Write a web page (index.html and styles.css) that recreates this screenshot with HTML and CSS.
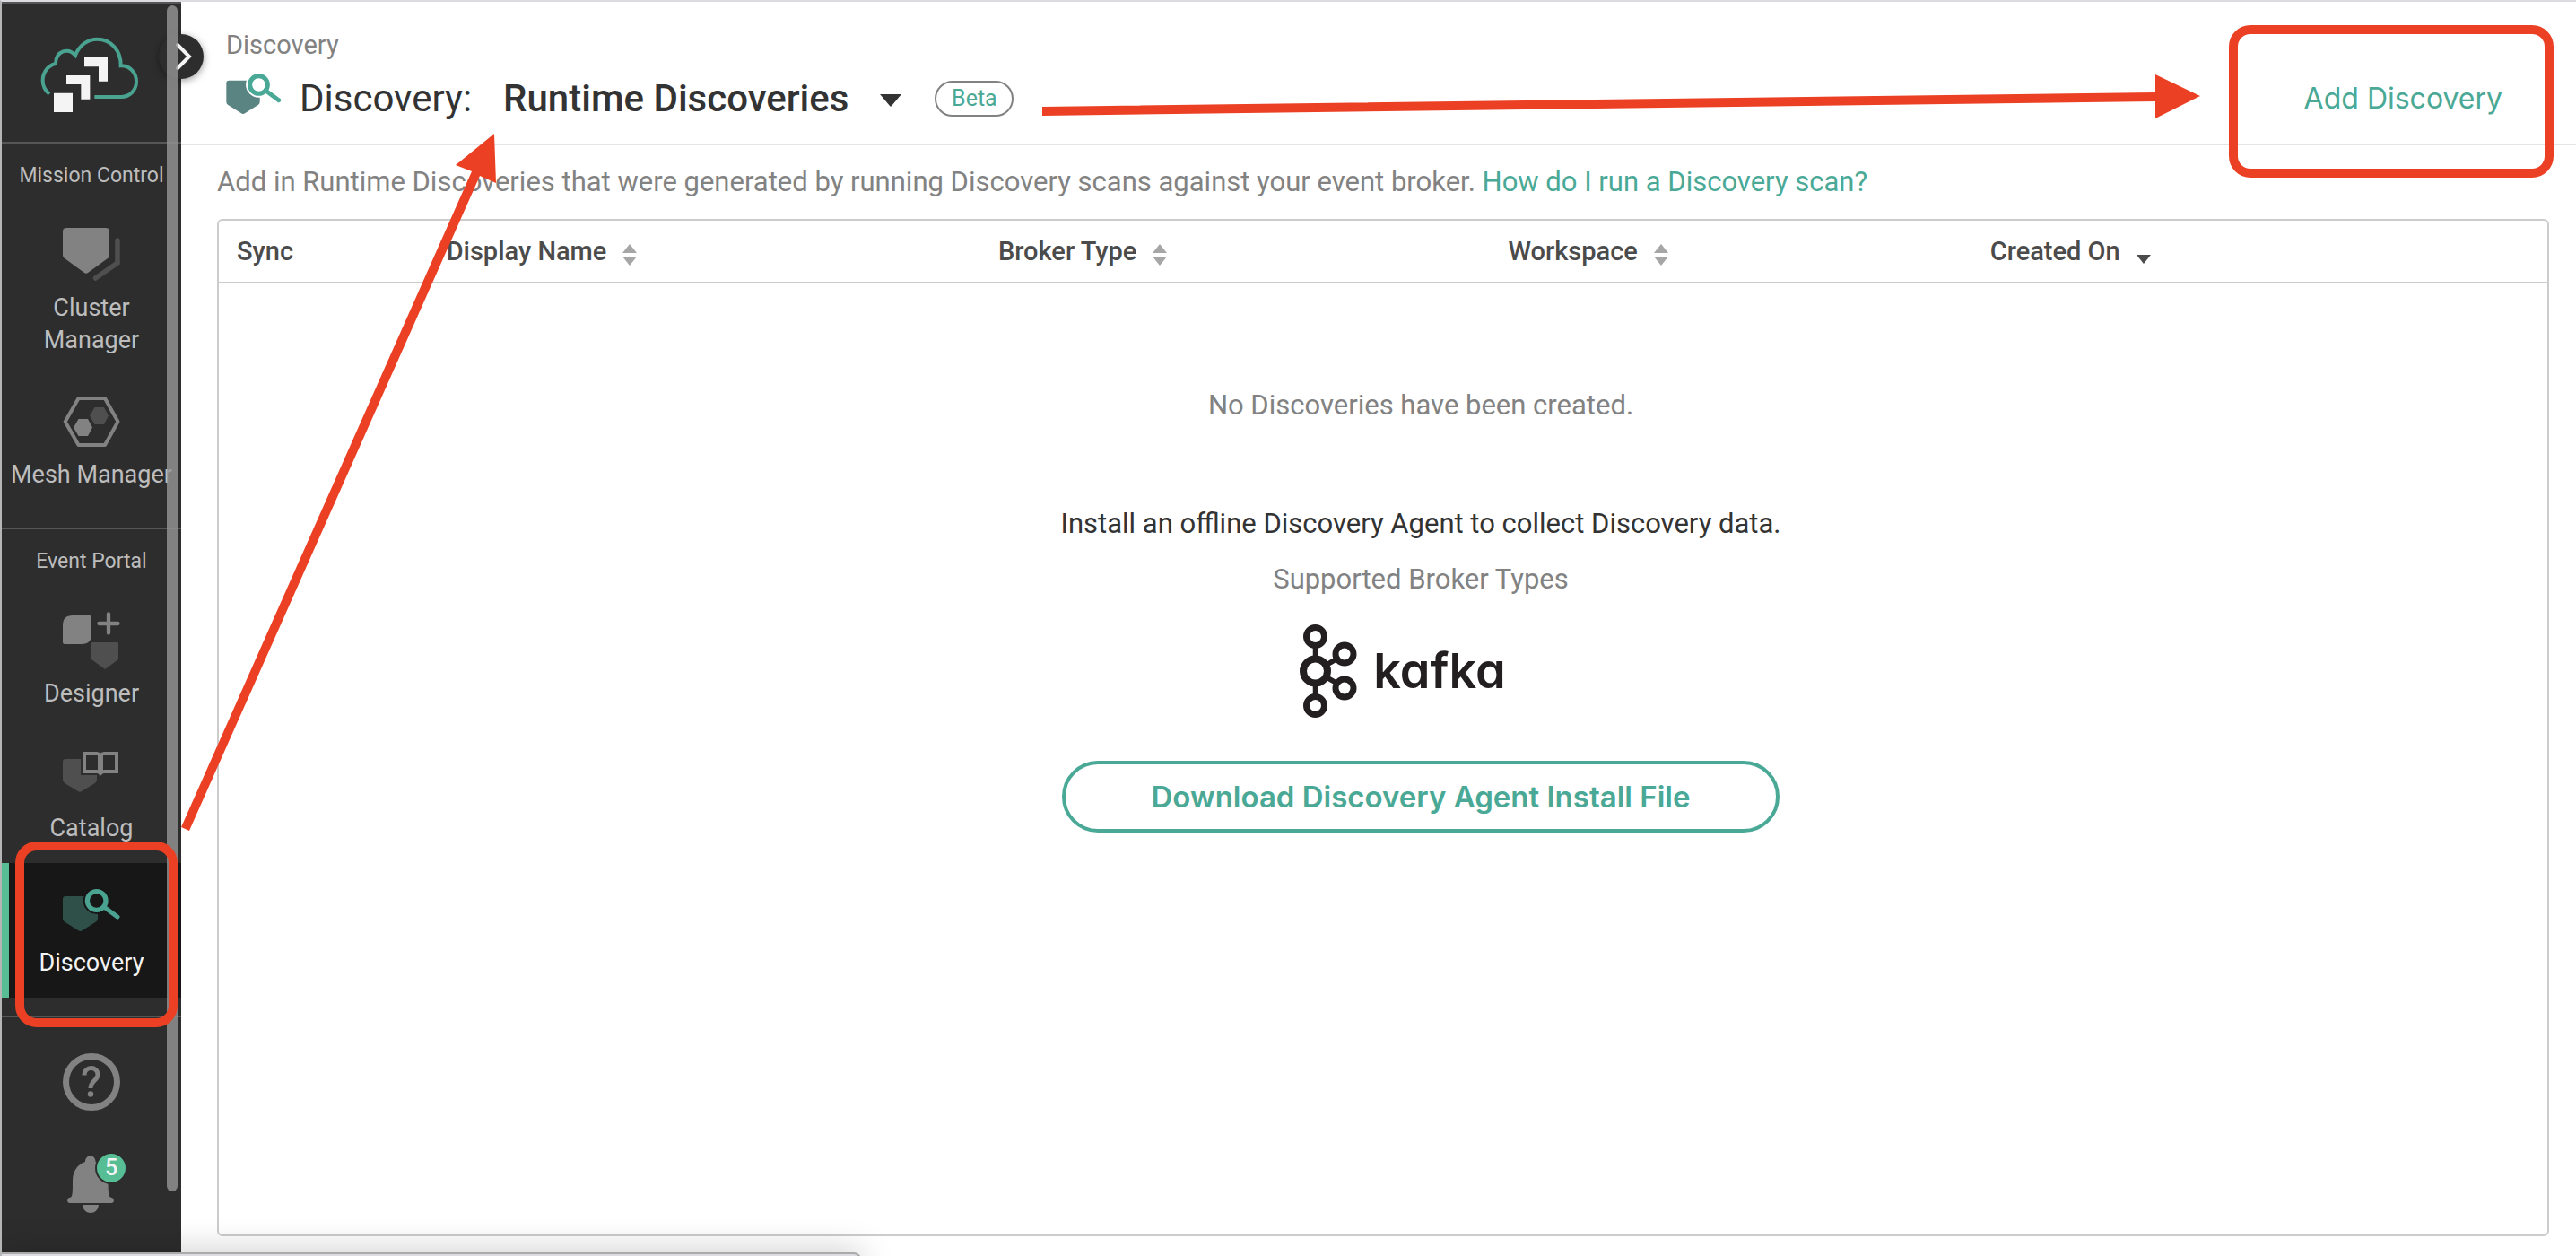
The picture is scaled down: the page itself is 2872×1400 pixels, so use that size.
FILE: index.html
```html
<!DOCTYPE html>
<html lang="en">
<head>
<meta charset="utf-8">
<title>Discovery: Runtime Discoveries</title>
<link rel="stylesheet" href="styles.css">
</head>
<body>
<div class="app">
  <nav class="sidebar" aria-label="Main">
    <a class="logo" href="#" aria-label="Home">
      <svg width="120" height="88" viewBox="126 114 360 264" fill="none">
        <path d="M165 317C147 302 143 287 143 272C143 245 160 222 186 216C187 172 229 161 252 188C266 152 296 134 325 134C371 134 405 172 404 223C433 222 456 245 456 276C456 304 434 327 406 327H316" stroke="#4aa290" stroke-width="12"/>
        <path d="M282 195H360V275H330V226H282ZM222 255H301V335H271V285H222ZM180 314H243V378H180Z" fill="#f4f4f4"/>
      </svg>
    </a>
    <section class="group">
      <h2 class="group-title">Mission Control</h2>
      <a class="item" href="#">
        <svg class="item-icon" viewBox="0 0 64 64">
          <path d="M4 2H48Q52 2 52 6V33Q52 35 50 36L28 52Q26 53.500 24 52L2 36Q0 35 0 33V6Q0 2 4 2Z" fill="#828282"/>
          <path d="M61 16V41L36.500 58" fill="none" stroke="#4f4f4f" stroke-width="5.500" stroke-linecap="round"/>
        </svg>
        <span>Cluster<br>Manager</span>
      </a>
      <a class="item" href="#">
        <svg class="item-icon" viewBox="0 0 64 64">
          <path d="M2.700 32L17.500 6H47L61.500 32L47 58H17.500Z" fill="none" stroke="#828282" stroke-width="4" stroke-linejoin="round"/>
          <path d="M12 38.500L17.500 29H28L33 38.500L28 48H17.500Z" fill="#828282"/>
          <path d="M30 25.500L35.500 16H46L51 25.500L46 35H35.500Z" fill="#4f4f4f"/>
        </svg>
        <span>Mesh Manager</span>
      </a>
    </section>
    <section class="group">
      <h2 class="group-title">Event Portal</h2>
      <a class="item" href="#">
        <svg class="item-icon" viewBox="0 0 64 64">
          <path d="M11 4H30Q32 4 32 6V25Q32 36 21 36H2Q0 36 0 34V15Q0 4 11 4Z" fill="#828282"/>
          <path d="M51 2.500V23.500M40.500 13H61.500" stroke="#828282" stroke-width="4.300" stroke-linecap="round"/>
          <path d="M33 34H61Q62 34 62 35V53L47 64L32 53V35Q32 34 33 34Z" fill="#4f4f4f"/>
        </svg>
        <span>Designer</span>
      </a>
      <a class="item" href="#">
        <svg class="item-icon" viewBox="0 0 64 64">
          <path d="M3 14H20V32H38V37Q38 39 36 41L21 50Q19 51.500 17 50L2 41Q0 39 0 37V17Q0 14 3 14Z" fill="#4f4f4f"/>
          <path d="M24 8H38Q40 8 42 10Q44 8 46 8H60V28H46Q44 28 42 30Q40 28 38 28H24Z" fill="none" stroke="#828282" stroke-width="4"/>
          <path d="M42 10V30" stroke="#828282" stroke-width="6"/>
        </svg>
        <span>Catalog</span>
      </a>
      <a class="item item-active" href="#" aria-current="page">
        <svg class="item-icon" viewBox="0 0 64 64">
          <path d="M3 17H36L39 37V42Q39 44 37 45.500L22 55Q19.500 57 17 55L2 45.500Q0 44 0 42V20Q0 17 3 17Z" fill="#2e5049"/>
          <circle cx="37.700" cy="22" r="15" fill="#171717"/>
          <circle cx="37.700" cy="22" r="10.300" fill="none" stroke="#4aa290" stroke-width="5.300"/>
          <path d="M46 29L61 40" stroke="#4aa290" stroke-width="5" stroke-linecap="round"/>
        </svg>
        <span>Discovery</span>
      </a>
    </section>
    <div class="tools">
      <button class="tool" type="button" aria-label="Help">
        <svg class="item-icon" viewBox="0 0 64 64" fill="none" stroke="#828282">
          <circle cx="32" cy="32" r="28.500" stroke-width="7"/>
          <path d="M24 24.500C24 14 39 14 39 24C39 30 31 31 31 39" stroke-width="5"/>
          <circle cx="31" cy="45.500" r="3.200" fill="#828282" stroke="none"/>
        </svg>
      </button>
      <button class="tool" type="button" aria-label="Notifications">
        <svg class="item-icon" viewBox="0 0 64 64" fill="#828282">
          <path d="M25 7C25 -2 36.500 -2 36.500 7C46 11 50.500 20 50.500 28C50.500 39 51 45 53 46.500C58 47 58 53 54 53H8C4 53 4 47 9 46.500C11 45 11 39 11 28C11 18 16 10 25 7ZM22 55H40C39 67 23 67 22 55Z"/>
        </svg>
        <span class="count">5</span>
      </button>
    </div>
    <button class="expand" type="button" aria-label="Expand menu">
      <svg width="50" height="50" viewBox="0 0 50 50" fill="none"><path d="M21 12L34 25L21 38" stroke="#f4f4f4" stroke-width="4" stroke-linecap="round"/></svg>
    </button>
    <div class="scroll-thumb"></div>
  </nav>

  <main class="main">
    <header class="header">
      <div class="heading">
        <div class="breadcrumb">Discovery</div>
        <div class="title-row">
          <svg class="title-icon" viewBox="0 9 64 48">
            <path d="M3 17H36L39 37V42Q39 44 37 45.500L22 55Q19.500 57 17 55L2 45.500Q0 44 0 42V20Q0 17 3 17Z" fill="#5a8482"/>
            <circle cx="37.700" cy="22" r="15" fill="#fff"/>
            <circle cx="37.700" cy="22" r="10.300" fill="none" stroke="#4aa996" stroke-width="5.300"/>
            <path d="M46 29L61 40" stroke="#4aa996" stroke-width="5" stroke-linecap="round"/>
          </svg>
          <h1 class="title">Discovery:</h1>
          <button class="switcher" type="button" aria-haspopup="listbox">Runtime Discoveries
            <svg width="26" height="32" viewBox="0 0 26 32"><path d="M1 11H25L14 24Q13 25 12 24Z" fill="#333"/></svg>
          </button>
          <span class="beta">Beta</span>
        </div>
      </div>
      <button class="add" type="button">Add Discovery</button>
      <div class="mark mark-add"></div>
    </header>

    <p class="intro">Add in Runtime Discoveries that were generated by running Discovery scans against your event broker. <a href="#">How do I run a Discovery scan?</a></p>

    <div class="panel">
      <table class="table">
        <thead>
          <tr>
            <th class="col-sync">Sync</th>
            <th class="col-name"><button class="sort" type="button">Display Name <svg width="16" height="32" viewBox="0 0 16 32"><path d="M8 8L16 18H0ZM8 32L16 22H0Z" fill="#a6a6a6"/></svg></button></th>
            <th class="col-broker"><button class="sort" type="button">Broker Type <svg width="16" height="32" viewBox="0 0 16 32"><path d="M8 8L16 18H0ZM8 32L16 22H0Z" fill="#a6a6a6"/></svg></button></th>
            <th class="col-space"><button class="sort" type="button">Workspace <svg width="16" height="32" viewBox="0 0 16 32"><path d="M8 8L16 18H0ZM8 32L16 22H0Z" fill="#a6a6a6"/></svg></button></th>
            <th aria-sort="descending"><button class="sort" type="button">Created On <svg width="16" height="32" viewBox="0 0 16 32"><path d="M8 30L16 20H0Z" fill="#4b4b4b"/></svg></button></th>
          </tr>
        </thead>
      </table>
      <div class="empty">
        <p class="muted">No Discoveries have been created.</p>
        <p class="install">Install an offline Discovery Agent to collect Discovery data.</p>
        <p class="muted supported">Supported Broker Types</p>
        <div class="kafka">
          <svg width="66" height="104" viewBox="0 0 66 104" fill="none" stroke="#231f20">
            <path d="M17.500 26V78M30 45L44 37M30 59L44 67" stroke-width="5.500"/>
            <g fill="#fff" stroke-width="7">
              <circle cx="17.500" cy="13.500" r="10"/>
              <circle cx="17.500" cy="90.500" r="10"/>
              <circle cx="50" cy="33" r="10"/>
              <circle cx="50" cy="71" r="10"/>
              <circle cx="17.500" cy="52" r="13.500" stroke-width="8"/>
            </g>
          </svg>
          <span>kafka</span>
        </div>
        <button class="download" type="button">Download Discovery Agent Install File</button>
      </div>
    </div>
  </main>

  <div class="mark mark-nav"></div>
  <svg class="arrow arrow-up" width="360" height="790" viewBox="200 140 360 790" fill="#ec4025">
    <path d="M202 922L526 191L508 184L551 149L553 204L535 196L211 926Z"/>
  </svg>
  <svg class="arrow arrow-right" width="1296" height="60" viewBox="1160 78 1296 60" fill="#ec4025">
    <path d="M1162 119L2403 103V83L2453 107L2403 132V113L1162 129Z"/>
  </svg>
  <div class="dock"></div>
</div>
</body>
</html>
```
FILE: styles.css
```css
* {
  box-sizing: border-box;
}

body {
  margin: 0;
  background: #fff;
  color: #333;
  font-family: Roboto, "Open Sans", sans-serif;
}

h1,
h2,
p {
  margin: 0;
  font-weight: 400;
}

button {
  margin: 0;
  padding: 0;
  border: 0;
  background: none;
  color: inherit;
  font: inherit;
  cursor: pointer;
}

a {
  color: #4aa996;
  text-decoration: none;
}

svg {
  display: block;
  flex: none;
}

.app {
  position: relative;
  display: grid;
  grid-template-columns: 200px 1fr;
  min-height: 100vh;
  border-top: 2px solid #dcdbe0;
  border-left: 2px solid #b4b6b5;
  overflow: hidden;
}

/* Sidebar */
.sidebar {
  position: relative;
  background: #2d2d2d;
  border-top: 2px solid #555;
  color: #bdbdbd;
}

.logo {
  display: flex;
  align-items: center;
  justify-content: center;
  height: 156px;
  border-bottom: 2px solid #565656;
}

.group {
  padding-bottom: 20px;
  border-bottom: 2px solid #565656;
}

.group-title {
  font-size: 23px;
  line-height: 72px;
  text-align: center;
  white-space: nowrap;
}

.item {
  display: flex;
  flex-direction: column;
  align-items: center;
  gap: 9px;
  padding: 20px 0 21px;
  color: #bdbdbd;
  font-size: 27px;
  line-height: 36px;
  text-align: center;
  white-space: nowrap;
}

.item-icon {
  width: 64px;
  height: 64px;
}

.item-active {
  background: #171717;
  box-shadow: inset 8px 0 #56bd95;
  color: #f4f4f4;
}

.tools {
  display: flex;
  flex-direction: column;
  align-items: center;
  gap: 50px;
  padding-top: 40px;
}

.tool {
  position: relative;
}

.count {
  position: absolute;
  top: -4px;
  left: 36px;
  width: 36px;
  border: 2px solid #2d2d2d;
  border-radius: 50%;
  background: #56bd95;
  color: #f4f4f4;
  font-size: 25px;
  font-weight: 500;
  line-height: 32px;
  text-align: center;
}

.expand {
  position: absolute;
  top: 34px;
  right: -25px;
  z-index: 1;
  border-radius: 50%;
  background: #2d2d2d;
  box-shadow: 0 2px 8px rgba(0, 0, 0, 0.4);
}

.scroll-thumb {
  position: absolute;
  top: 2px;
  right: 4px;
  bottom: 72px;
  z-index: 2;
  width: 12px;
  border-radius: 6px;
  background: rgba(150, 150, 150, 0.8);
}

/* Main area */
.main {
  display: flex;
  flex-direction: column;
  min-width: 0;
}

.header {
  position: relative;
  display: flex;
  align-items: flex-end;
  justify-content: space-between;
  height: 160px;
  padding: 0 82px 22px 50px;
  border-bottom: 2px solid #e4e5e4;
}

.breadcrumb {
  margin-bottom: 14px;
  color: #828282;
  font-size: 29px;
  line-height: 36px;
}

.title-row {
  display: flex;
  align-items: flex-start;
  font-size: 42px;
  line-height: 56px;
}

.title-icon {
  width: 62px;
  height: 46px;
  margin-right: 20px;
}

.title {
  margin-right: 35px;
  font-size: 42px;
}

.switcher {
  display: flex;
  align-items: center;
  gap: 34px;
  margin-right: 36px;
  font-weight: 500;
}

.beta {
  align-self: center;
  width: 88px;
  border: 2px solid #828282;
  border-radius: 20px;
  color: #4aa996;
  font-size: 25px;
  line-height: 36px;
  text-align: center;
}

.add {
  color: #4aa996;
  font-family: Inter, sans-serif;
  font-size: 32px;
  line-height: 56px;
}

.intro {
  padding-left: 40px;
  color: #828282;
  font-size: 31px;
  line-height: 82px;
}

.panel {
  flex: 1;
  margin: 0 30px 22px 40px;
  border: 2px solid #ccc;
  border-radius: 6px;
}

.table {
  width: 100%;
  border-spacing: 0;
  table-layout: fixed;
  color: #4b4b4b;
  font-size: 29px;
  line-height: 36px;
}

.table th {
  height: 70px;
  padding: 0 0 0 20px;
  border-bottom: 2px solid #ccc;
  font-weight: 500;
  text-align: left;
}

.col-sync {
  width: 9%;
}

.col-name {
  width: 23.700%;
}

.col-broker {
  width: 21.900%;
}

.col-space {
  width: 20.700%;
}

.sort {
  display: flex;
  align-items: center;
  gap: 18px;
  font-weight: 500;
}

.empty {
  display: flex;
  flex-direction: column;
  align-items: center;
  padding: 118px 0 40px 84px;
  font-size: 31px;
  line-height: 36px;
}

.muted {
  color: #828282;
}

.install {
  margin-top: 96px;
}

.supported {
  margin-top: 26px;
}

.kafka {
  display: flex;
  align-items: center;
  gap: 16px;
  margin-top: 32px;
  padding-right: 40px;
  color: #231f20;
  font-family: Inter, sans-serif;
  font-feature-settings: "cv11";
  font-size: 54px;
  font-weight: 600;
}

.download {
  width: 800px;
  max-width: 100%;
  margin-top: 48px;
  border: 4px solid #4aa996;
  border-radius: 40px;
  color: #4aa996;
  font-family: Inter, sans-serif;
  font-size: 33px;
  font-weight: 600;
  line-height: 72px;
}

/* Callouts drawn over the page */
.mark {
  position: absolute;
  z-index: 3;
  border: 10px solid #ec4025;
  border-radius: 24px;
  pointer-events: none;
}

.mark-add {
  top: 26px;
  right: 25px;
  width: 362px;
  height: 170px;
}

.mark-nav {
  top: 936px;
  left: 15px;
  width: 181px;
  height: 207px;
}

.arrow {
  position: absolute;
  z-index: 3;
  pointer-events: none;
}

.arrow-up {
  top: 138px;
  left: 198px;
}

.arrow-right {
  top: 76px;
  left: 1158px;
}

/* Edge of the window below */
.dock {
  position: absolute;
  bottom: -20px;
  left: 0;
  width: 958px;
  height: 24px;
  border: 2px solid #aaa;
  border-left: 0;
  border-top-right-radius: 8px;
  background: #dfdde3;
  box-shadow: 0 0 36px rgba(0, 0, 0, 0.25);
}
```
